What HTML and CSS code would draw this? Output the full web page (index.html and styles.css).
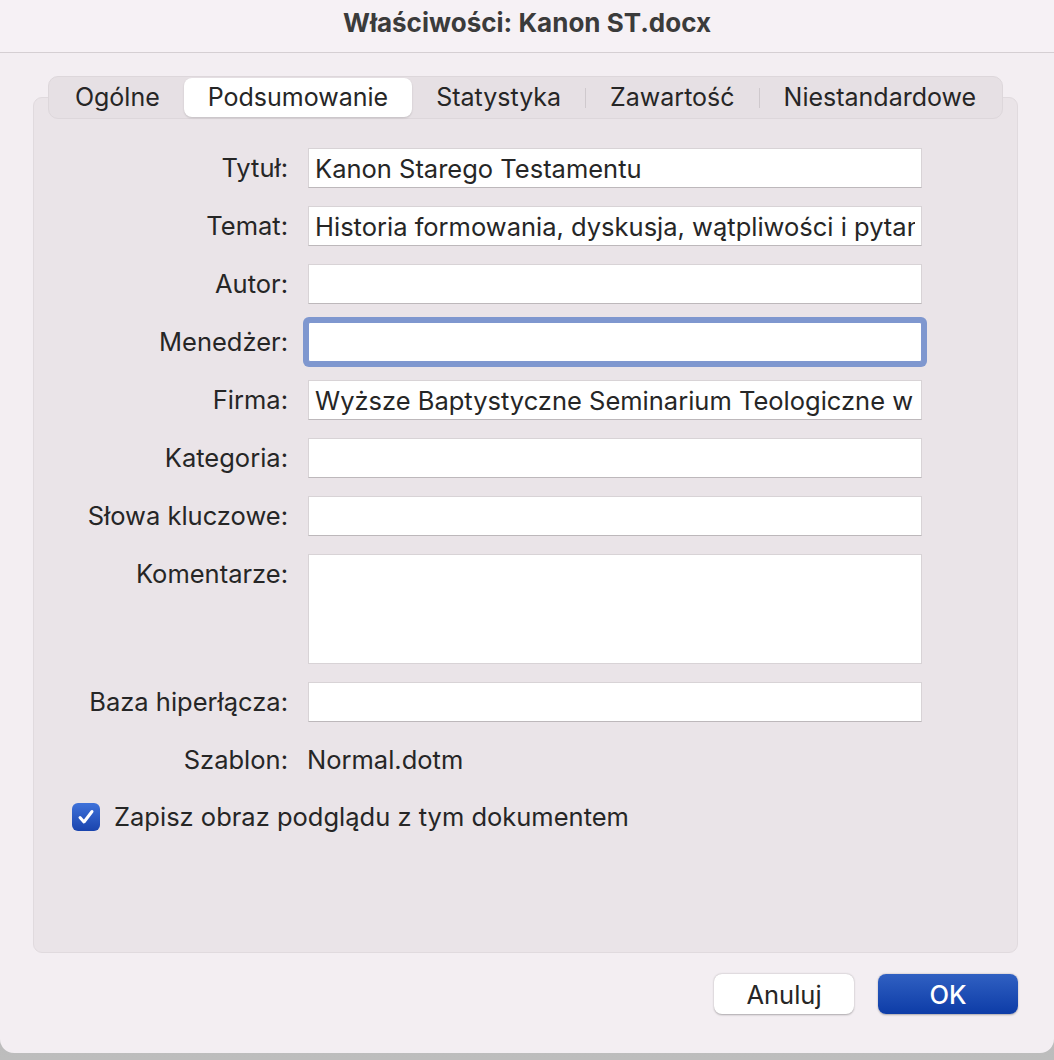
FILE: index.html
```html
<!DOCTYPE html>
<html lang="pl">
<head>
  <meta charset="UTF-8">
  <title>Właściwości: Kanon ST.docx</title>
  <link rel="stylesheet" href="styles.css">
</head>
<body>

  <div class="window">
    <div class="titlebar">Właściwości: Kanon ST.docx</div>

    <div class="content">
      <div class="tabs">
        <div class="tab">Ogólne</div>
        <div class="tab active">Podsumowanie</div>
        <div class="tab">Statystyka</div>
        <div class="sep"></div>
        <div class="tab">Zawartość</div>
        <div class="sep"></div>
        <div class="tab">Niestandardowe</div>
      </div>

      <div class="panel">
        <div class="form">
          <label class="lbl">Tytuł:</label>
          <input class="field" type="text" value="Kanon Starego Testamentu">

          <label class="lbl">Temat:</label>
          <input class="field" type="text" value="Historia formowania, dyskusja, wątpliwości i pytania">

          <label class="lbl">Autor:</label>
          <input class="field" type="text" value="">

          <label class="lbl">Menedżer:</label>
          <input class="field focused" type="text" value="">

          <label class="lbl">Firma:</label>
          <input class="field" type="text" value="Wyższe Baptystyczne Seminarium Teologiczne w Warszawie">

          <label class="lbl">Kategoria:</label>
          <input class="field" type="text" value="">

          <label class="lbl">Słowa kluczowe:</label>
          <input class="field" type="text" value="">

          <label class="lbl">Komentarze:</label>
          <textarea class="field area"></textarea>

          <label class="lbl">Baza hiperłącza:</label>
          <input class="field" type="text" value="">

          <span class="lbl">Szablon:</span>
          <span class="value">Normal.dotm</span>
        </div>

        <label class="check">
          <span class="box">
            <svg width="18" height="16" viewBox="0 0 18 16">
              <path d="M3 8.5 L7 13 L15 2.5" fill="none" stroke="#fff" stroke-width="3" stroke-linecap="round" stroke-linejoin="round"/>
            </svg>
          </span>
          Zapisz obraz podglądu z tym dokumentem
        </label>
      </div>

      <div class="buttons">
        <button class="btn">Anuluj</button>
        <button class="btn btn-ok">OK</button>
      </div>
    </div>
  </div>

</body>
</html>
```

FILE: styles.css
```css
html, body {
  margin: 0;
  height: 100%;
}

body {
  background: linear-gradient(#8f8f8f, #bdbdbd);
  font-family: Inter, "Noto Sans", "Liberation Sans", sans-serif;
  color: #262626;
  overflow: hidden;
}

.window {
  width: 1054px;
  height: 1053px;
  background-color: #f3eef2;
  border-radius: 0 0 14px 14px;
  display: flex;
  flex-direction: column;
}

.titlebar {
  height: 52px;
  line-height: 46px;
  text-align: center;
  font-weight: 700;
  font-size: 26px;
  color: #3b3b3b;
  background-color: #f6f1f5;
  border-bottom: 1px solid #d5cfd3;
  flex-shrink: 0;
}

.content {
  padding: 23px 36px 0 33px;
  display: flex;
  flex-direction: column;
}

.tabs {
  position: relative;
  z-index: 1;
  align-self: center;
  display: flex;
  align-items: center;
  height: 43px;
  box-sizing: border-box;
  padding: 0 2px;
  background-color: #e6e0e4;
  border: 1px solid #ddd7db;
  border-radius: 10px;
  font-size: 25px;
}

.tab {
  padding: 0 24px;
  height: 39px;
  line-height: 38px;
  border-radius: 8px;
}

.tab.active {
  background-color: #fff;
  box-shadow: 0 1px 2px rgba(0,0,0,0.15);
}

.sep {
  width: 1px;
  height: 20px;
  background-color: #cfc9cd;
}

.panel {
  margin-top: -22px;
  height: 856px;
  box-sizing: border-box;
  padding-top: 50px;
  background-color: #eae4e8;
  border: 1px solid #e0dade;
  border-radius: 9px;
}

.form {
  display: grid;
  grid-template-columns: 254px 614px;
  column-gap: 20px;
  row-gap: 18px;
  font-size: 25.5px;
}

.lbl {
  text-align: right;
  line-height: 40px;
  align-self: start;
  white-space: nowrap;
}

.field {
  height: 40px;
  box-sizing: border-box;
  margin: 0;
  padding: 0 6px;
  border: 1px solid #d8d3d6;
  border-bottom-color: #bdb8bb;
  background-color: #fff;
  font-family: inherit;
  font-size: 25.5px;
  color: #262626;
  outline: none;
}

.field.focused {
  border-radius: 2px;
  box-shadow: 0 0 0 5px #7f97cf;
  border-color: #7f97cf;
}

.area {
  height: 110px;
  resize: none;
  border-bottom-color: #d8d3d6;
}

.value {
  line-height: 40px;
  margin-left: -1px;
}

.check {
  display: flex;
  align-items: center;
  gap: 14px;
  margin: 17px 0 0 38px;
  font-size: 25.5px;
  line-height: 40px;
}

.box {
  width: 28px;
  height: 28px;
  border-radius: 6px;
  background: linear-gradient(#3f72da, #1a44ad);
  display: flex;
  align-items: center;
  justify-content: center;
}

.buttons {
  display: flex;
  justify-content: flex-end;
  gap: 24px;
  margin-top: 21px;
}

.btn {
  width: 140px;
  height: 40px;
  border: none;
  border-radius: 8px;
  background-color: #fff;
  box-shadow: 0 0.5px 2px rgba(0,0,0,0.3);
  font-family: inherit;
  font-size: 25.5px;
  color: #262626;
}

.btn-ok {
  background: linear-gradient(#3060c2, #0d3ca7);
  color: #fff;
  font-weight: 500;
}
```
